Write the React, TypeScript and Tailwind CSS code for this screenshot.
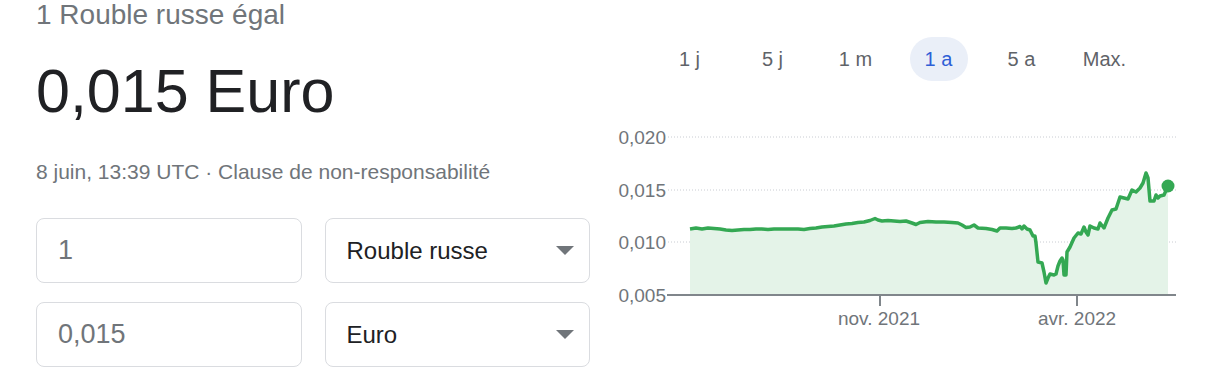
import React from "react";

const ranges = ["1 j", "5 j", "1 m", "1 a", "5 a", "Max."];

// rate history, traced in page coordinates (x, y)
const points: [number, number][] = [
  [690, 229], [696, 228], [702, 229], [708, 228], [714, 228.5], [720, 229], [726, 230], [732, 230.5],
  [738, 230], [744, 229.5], [750, 229.5], [756, 229], [762, 229], [768, 229.5], [774, 229], [780, 229],
  [786, 229], [792, 229], [798, 229], [804, 229.5], [810, 228.5], [816, 228], [822, 227], [828, 226.5],
  [834, 226], [840, 225], [846, 224], [852, 223.5], [858, 222.5], [864, 222], [870, 220.5], [875, 218.5],
  [878, 220], [882, 221], [888, 220.5], [894, 221], [900, 221.5], [906, 221], [912, 223], [916, 224.5],
  [920, 222.5], [928, 221.5], [936, 222], [944, 222], [952, 222.5], [958, 223], [962, 225], [966, 227.5],
  [970, 227], [974, 225], [978, 228], [986, 228.5], [992, 229.5], [997, 231], [1000, 228], [1006, 228],
  [1012, 228.5], [1016, 228], [1020, 226.5], [1022, 229], [1024, 226], [1027, 229], [1030, 230],
  [1033, 236], [1035, 236], [1036, 243], [1038, 262], [1042, 263], [1044, 272], [1046, 283], [1048, 278],
  [1050, 274], [1054, 275], [1056, 274], [1058, 266], [1060, 261], [1062, 258], [1063, 260], [1064, 275],
  [1066, 275], [1067, 252], [1070, 247], [1074, 238], [1078, 233], [1081, 234], [1084, 227], [1086, 232],
  [1088, 235], [1090, 226], [1094, 228], [1098, 229], [1100, 223], [1104, 228], [1108, 218], [1112, 210],
  [1116, 209], [1120, 197], [1124, 198], [1128, 199], [1132, 190], [1136, 192], [1140, 188], [1143, 183],
  [1146, 173], [1148, 178], [1150, 201], [1154, 201], [1156, 195], [1158, 198], [1160, 196], [1164, 195],
  [1168, 186],
];

const Caret = () => (
  <svg width="18" height="9" viewBox="0 0 18 9">
    <polygon points="0,0 18,0 9,9" fill="#70757a" />
  </svg>
);

const AmountBox: React.FC<{ value: string }> = ({ value }) => (
  <div className="flex items-center h-[65px] border border-[#dadce0] rounded-lg px-[21px] text-[27px] text-[#70757a]">
    {value}
  </div>
);

const CurrencyBox: React.FC<{ name: string }> = ({ name }) => (
  <div className="flex items-center justify-between h-[65px] border border-[#dadce0] rounded-lg pl-[21px] pr-[15px] text-[24px] text-[#202124]">
    <span>{name}</span>
    <Caret />
  </div>
);

const Chart = () => {
  const line = points.map((p) => p.join(",")).join(" ");
  const area = `${line} 1168,295 690,295`;
  const grid = [
    { y: 137, label: "0,020" },
    { y: 190, label: "0,015" },
    { y: 242, label: "0,010" },
  ];
  return (
    <svg width="623" height="230" viewBox="600 110 623 230" className="block">
      {grid.map((g) => (
        <g key={g.label}>
          <line x1="668" x2="1176" y1={g.y} y2={g.y} stroke="#c9ccd2" strokeWidth="1" strokeDasharray="1 2" />
          <text x="666" y={g.y + 7} textAnchor="end" fontSize="19" fill="#70757a">
            {g.label}
          </text>
        </g>
      ))}
      <polygon points={area} fill="#e4f3e8" />
      <polyline points={line} fill="none" stroke="#34a853" strokeWidth="3.5" strokeLinejoin="round" />
      <circle cx="1168" cy="186" r="6.5" fill="#34a853" />
      <line x1="667" x2="1176" y1="295" y2="295" stroke="#80868b" strokeWidth="2" />
      <line x1="880" x2="880" y1="295" y2="306" stroke="#80868b" strokeWidth="2" />
      <line x1="1077" x2="1077" y1="295" y2="306" stroke="#80868b" strokeWidth="2" />
      <text x="666" y="302" textAnchor="end" fontSize="19" fill="#70757a">
        0,005
      </text>
      <text x="879" y="325" textAnchor="middle" fontSize="19" fill="#70757a">
        nov. 2021
      </text>
      <text x="1077" y="325" textAnchor="middle" fontSize="19" fill="#70757a">
        avr. 2022
      </text>
    </svg>
  );
};

export default function App() {
  return (
    <div className="flex w-[1223px] h-[389px] overflow-hidden bg-white font-['Liberation_Sans',Arial,sans-serif]">
      <div className="w-[590px] pl-[36px] shrink-0">
        <p className="text-[28px] leading-[30px] text-[#70757a]">1 Rouble russe égal</p>
        <p className="mt-[31px] text-[61px] leading-[60px] text-[#202124]">0,015 Euro</p>
        <p className="mt-[39px] text-[21px] leading-[24px] text-[#70757a]">
          8 juin, 13:39 UTC · Clause de non-responsabilité
        </p>
        <div className="mt-[34px] grid grid-cols-2 gap-x-[23px] gap-y-[19px]">
          <AmountBox value="1" />
          <CurrencyBox name="Rouble russe" />
          <AmountBox value="0,015" />
          <CurrencyBox name="Euro" />
        </div>
      </div>
      <div className="flex-1">
        <div className="flex mt-[37px] ml-[58px] text-[20px] text-[#5f6368]">
          {ranges.map((r) => (
            <div key={r} className="w-[83px] flex justify-center">
              {r === "1 a" ? (
                <span className="flex items-center justify-center w-[58px] h-[44px] rounded-full bg-[#eaeff8] text-[#2f5fd6]">
                  {r}
                </span>
              ) : (
                <span className="flex items-center h-[44px]">{r}</span>
              )}
            </div>
          ))}
        </div>
        <div className="mt-[29px] ml-[10px]">
          <Chart />
        </div>
      </div>
    </div>
  );
}
